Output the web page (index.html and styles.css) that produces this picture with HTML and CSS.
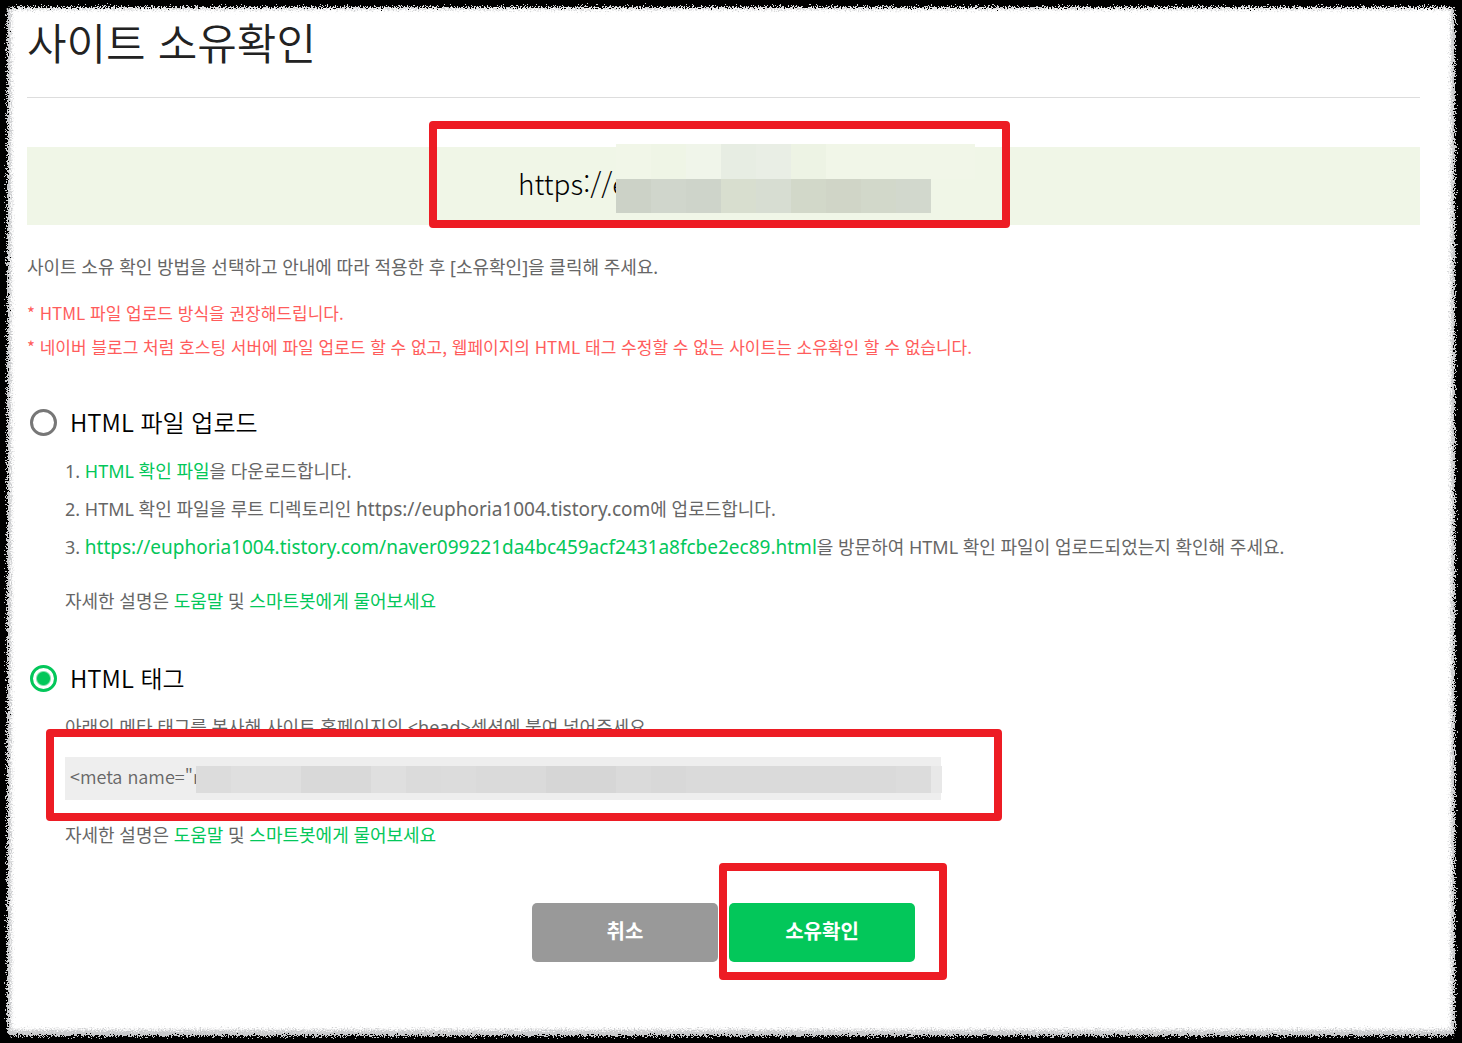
FILE: index.html
```html
<!DOCTYPE html>
<html lang="ko">
<head>
    <meta charset="UTF-8">
    <meta name="viewport" content="width=device-width, initial-scale=1.0">
    <title>사이트 소유확인</title>
    <link rel="stylesheet" href="styles.css">
</head>
<body>
    <main class="container">
        <h1>사이트 소유확인</h1>

        <div class="site">
            <div class="site-url">
                https://e
                <svg class="site-mosaic" width="359" height="69" viewBox="0 0 359 69" shape-rendering="crispEdges" aria-hidden="true">
                    <rect width="359" height="35" fill="#f1f6e8"/>
                    <rect x="35" width="35" height="35" fill="#eff5e6"/>
                    <rect x="70" width="35" height="35" fill="#f0f5ea"/>
                    <rect x="105" width="35" height="35" fill="#e7ede3"/>
                    <rect x="140" width="35" height="35" fill="#e9eee5"/>
                    <rect x="175" width="35" height="35" fill="#edf3e4"/>
                    <rect y="35" width="35" height="34" fill="#ccd2c7"/>
                    <rect x="35" y="35" width="35" height="34" fill="#d0d6cc"/>
                    <rect x="70" y="35" width="35" height="34" fill="#ced4ca"/>
                    <rect x="105" y="35" width="35" height="34" fill="#d8decf"/>
                    <rect x="140" y="35" width="35" height="34" fill="#d7ddd2"/>
                    <rect x="175" y="35" width="35" height="34" fill="#d2d8c9"/>
                    <rect x="210" y="35" width="35" height="34" fill="#d0d5c7"/>
                    <rect x="245" y="35" width="35" height="34" fill="#d2d8ca"/>
                    <rect x="280" y="35" width="35" height="34" fill="#d2d8cd"/>
                </svg>
                <span class="mark mark-url"></span>
            </div>
        </div>

        <p class="guide">사이트 소유 확인 방법을 선택하고 안내에 따라 적용한 후 [소유확인]을 클릭해 주세요.</p>
        <div class="notice">
            <p>* HTML 파일 업로드 방식을 권장해드립니다.</p>
            <p>* 네이버 블로그 처럼 호스팅 서버에 파일 업로드 할 수 없고, 웹페이지의 HTML 태그 수정할 수 없는 사이트는 소유확인 할 수 없습니다.</p>
        </div>

        <section class="method">
            <div class="method-title">
                <input type="radio" name="method" id="method-file">
                <label for="method-file">HTML 파일 업로드</label>
            </div>
            <div class="method-body">
                <p>1. <a href="#">HTML 확인 파일</a>을 다운로드합니다.</p>
                <p>2. HTML 확인 파일을 루트 디렉토리인 <span class="url">https://euphoria1004.tistory.com</span>에 업로드합니다.</p>
                <p>3. <a href="#" class="url">https://euphoria1004.tistory.com/naver099221da4bc459acf2431a8fcbe2ec89.html</a>을 방문하여 HTML 확인 파일이 업로드되었는지 확인해 주세요.</p>
                <p class="help">자세한 설명은 <a href="#">도움말</a> 및 <a href="#">스마트봇에게 물어보세요</a></p>
            </div>
        </section>

        <section class="method">
            <div class="method-title">
                <input type="radio" name="method" id="method-tag" checked>
                <label for="method-tag">HTML 태그</label>
            </div>
            <div class="method-body">
                <p><label for="meta-tag">아래의 메타 태그를 복사해 사이트 홈페이지의 &lt;head&gt;섹션에 붙여 넣어주세요.</label></p>
                <div class="meta">
                    <input type="text" id="meta-tag" value="&lt;meta name=&quot;n" readonly>
                    <svg class="meta-mosaic" width="746" height="27" viewBox="0 0 746 27" shape-rendering="crispEdges" aria-hidden="true">
                        <rect width="735" height="27" fill="#dadada"/>
                        <rect width="35" height="27" fill="#dcdcdc"/>
                        <rect x="35" width="70" height="27" fill="#dfdfdf"/>
                        <rect x="105" width="70" height="27" fill="#d9d9d9"/>
                        <rect x="175" width="35" height="27" fill="#dfdfdf"/>
                        <rect x="210" width="35" height="27" fill="#dbdbdb"/>
                        <rect x="245" width="35" height="27" fill="#dcdcdc"/>
                        <rect x="350" width="70" height="27" fill="#d6d6d6"/>
                        <rect x="455" width="35" height="27" fill="#d8d8d8"/>
                        <rect x="700" width="35" height="27" fill="#dcdcdc"/>
                        <rect x="735" width="11" height="27" fill="#e8e8e8"/>
                    </svg>
                    <span class="mark mark-meta"></span>
                </div>
                <p class="help">자세한 설명은 <a href="#">도움말</a> 및 <a href="#">스마트봇에게 물어보세요</a></p>
            </div>
        </section>

        <div class="buttons">
            <button type="button" class="cancel">취소</button>
            <div class="confirm-wrap">
                <button type="button" class="confirm">소유확인</button>
                <span class="mark mark-confirm"></span>
            </div>
        </div>
    </main>

    <div class="frame"></div>
    <svg class="defs" width="0" height="0" aria-hidden="true">
        <filter id="rough" x="0" y="0" width="100%" height="100%" color-interpolation-filters="sRGB">
            <feTurbulence type="fractalNoise" baseFrequency="0.7" numOctaves="3" seed="4" result="noise"/>
            <feDisplacementMap in="SourceGraphic" in2="noise" scale="11" xChannelSelector="R" yChannelSelector="G"/>
        </filter>
    </svg>
</body>
</html>
```

FILE: styles.css
```css
* {
    box-sizing: border-box;
}
body {
    margin: 0;
    min-height: 100vh;
    background: white;
    color: #666;
    font-family: "Noto Sans", "Noto Sans CJK KR", sans-serif;
    font-size: 18px;
    line-height: 38px;
}
.container {
    padding: 14px 42px 80px 27px;
}
h1, p {
    margin: 0;
}
h1 {
    padding-bottom: 29px;
    border-bottom: 1px solid #ddd;
    color: #222;
    font-family: "Noto Sans CJK KR", sans-serif;
    font-size: 43px;
    font-weight: 350;
    line-height: 54px;
}
a {
    color: #03c75a;
    text-decoration: none;
}
.url {
    font-size: 19px;
}
.site {
    display: flex;
    justify-content: center;
    margin-top: 49px;
    padding: 17px 0 23px;
    background: #f0f6e7;
}
.site-url {
    position: relative;
    width: 411px;
    color: #000;
    font-family: "Noto Sans CJK KR", sans-serif;
    font-size: 28px;
    font-weight: 300;
}
.site-mosaic {
    position: absolute;
    left: 98px;
    top: -20px;
}
.guide {
    margin-top: 25px;
    line-height: 34px;
}
.notice {
    margin-top: 12px;
    color: #ff5c5c;
    font-family: "Noto Sans CJK KR", sans-serif;
    font-size: 17px;
    line-height: 34px;
}
.method {
    margin-top: 39px;
}
.method-title {
    display: flex;
    align-items: center;
    gap: 13px;
    margin-bottom: 11px;
    padding-left: 3px;
    color: #000;
    font-family: "Noto Sans CJK KR", sans-serif;
    font-size: 24px;
    font-weight: 350;
}
.method-title input {
    appearance: none;
    width: 27px;
    height: 27px;
    margin: 0;
    border: 3px solid #777;
    border-radius: 50%;
}
.method-title input:checked {
    border-color: #03c75a;
    background: radial-gradient(circle, #03c75a 6px, white 8px);
}
.method-body {
    padding-left: 38px;
}
.help {
    margin-top: 16px;
}
.meta {
    position: relative;
    max-width: 876px;
    margin-top: 11px;
}
.meta input {
    display: block;
    width: 100%;
    height: 43px;
    padding: 0 5px 6px;
    border: 0;
    background: #eee;
    color: #666;
    font-family: "Noto Sans CJK KR", sans-serif;
    font-size: 18px;
    font-weight: 350;
}
.meta-mosaic {
    position: absolute;
    left: 131px;
    top: 9px;
}
.buttons {
    display: flex;
    justify-content: center;
    gap: 11px;
    margin-top: 49px;
}
.confirm-wrap {
    position: relative;
}
button {
    display: block;
    width: 186px;
    height: 59px;
    padding: 0 0 4px;
    border: 0;
    border-radius: 5px;
    color: white;
    font-family: "Noto Sans CJK KR", sans-serif;
    font-size: 20px;
    font-weight: 700;
}
.cancel {
    background: #999;
}
.confirm {
    background: #03c75a;
}

/* red highlight boxes */
.mark {
    position: absolute;
    border: 8px solid #ed1c24;
    border-radius: 4px;
    pointer-events: none;
}
.mark-url {
    inset: -43px -81px -26px -89px;
}
.mark-meta {
    inset: -28px -61px -21px -19px;
}
.mark-confirm {
    inset: -40px -32px -18px -10px;
}

/* torn black edge round the page */
.frame {
    position: fixed;
    inset: -10px;
    border: 17px solid #000;
    border-radius: 22px;
    box-shadow: inset 0 -2px 3px 4px #c8c9cb;
    filter: url(#rough);
    pointer-events: none;
}
.defs {
    position: absolute;
}
```
